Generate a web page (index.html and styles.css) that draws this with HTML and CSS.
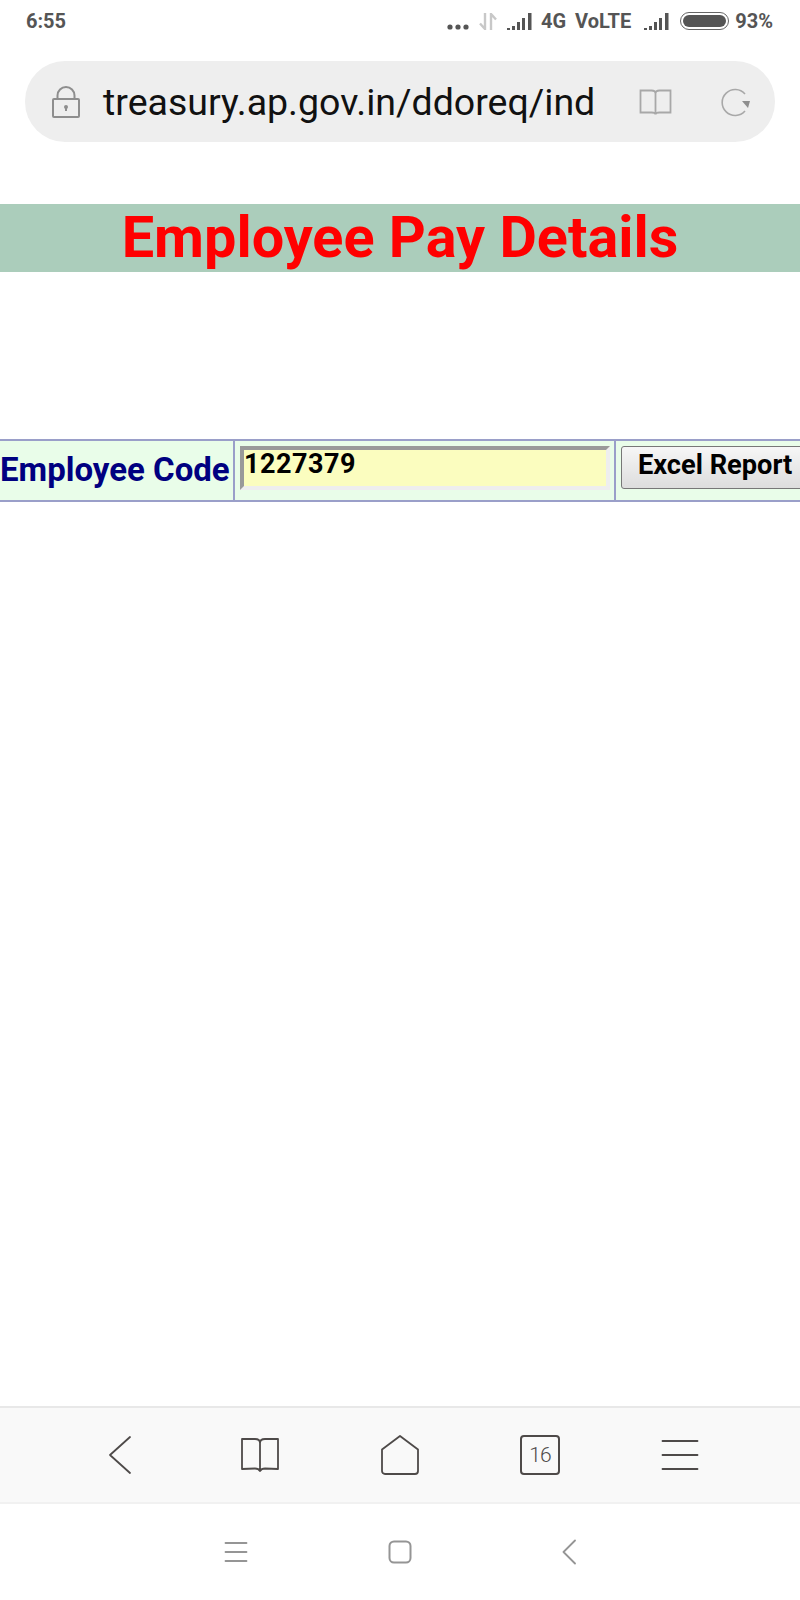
FILE: index.html
```html
<!DOCTYPE html>
<html lang="en">
<head>
    <meta charset="UTF-8">
    <meta name="viewport" content="width=device-width, initial-scale=1.0">
    <title>Employee Pay Details</title>
    <link rel="stylesheet" href="styles.css">
</head>
<body>

    <div class="status-bar">
        <span class="time">6:55</span>
        <div class="status-right">
            <svg class="dots" width="22" height="6" viewBox="0 0 22 6"><circle cx="3" cy="3" r="2.6"/><circle cx="11" cy="3" r="2.6"/><circle cx="19" cy="3" r="2.6"/></svg>
            <svg class="arrows" width="18" height="17" viewBox="0 0 18 17"><path d="M6 0v16L1 10.500M12 17V1l5 5.500" fill="none" stroke="#c8c8c8" stroke-width="2.400"/></svg>
            <svg class="signal" width="26" height="17" viewBox="0 0 26 17"><path d="M0 15h3v2H0zM5 13h3v4H5zM10 9h3v8h-3zM15 5h3v12h-3zM21 0h3.500v17H21z"/></svg>
            <span class="net">4G</span>
            <span class="net volte">VoLTE</span>
            <svg class="signal last" width="26" height="17" viewBox="0 0 26 17"><path d="M0 15h3v2H0zM5 13h3v4H5zM10 9h3v8h-3zM15 5h3v12h-3zM21 0h3.500v17H21z"/></svg>
            <div class="battery"><div class="battery-fill"></div></div>
            <span class="percent">93%</span>
        </div>
    </div>

    <div class="address-wrap">
        <div class="address-bar">
            <svg class="lock" width="30" height="34" viewBox="0 0 30 34" fill="none" stroke="#8e8e8e" stroke-width="2"><rect x="2" y="14" width="26" height="18" rx="1"/><path d="M6.500 14V10.500a8.500 8.500 0 0 1 17 0V14"/><circle cx="15" cy="22" r="2" fill="#8e8e8e" stroke="none"/><path d="M15 22v4"/></svg>
            <span class="url">treasury.ap.gov.in/ddoreq/ind</span>
            <svg class="book-small" width="33" height="28" viewBox="0 0 33 28" fill="none" stroke="#a8a8a8" stroke-width="1.800"><path d="M1.500 2.500h11c2 0 4 1 4 3v21c0-1.500-2-2-4-2h-11zM31.500 2.500h-11c-2 0-4 1-4 3v21c0-1.500 2-2 4-2h11z"/></svg>
            <svg class="reload" width="30" height="30" viewBox="0 0 30 30" fill="none"><path d="M24 7A13 13 0 1 0 24 24" stroke="#a8a8a8" stroke-width="1.600"/><path d="M21 14h8l-2 7z" fill="#8e8e8e"/></svg>
        </div>
    </div>

    <div class="page">
        <h1 class="title">Employee Pay Details</h1>

        <table class="emp-table">
            <tr>
                <td class="lbl">Employee Code</td>
                <td class="inp"><input type="text" class="code" value="1227379"></td>
                <td class="btn-cell"><button class="excel">Excel Report</button></td>
            </tr>
        </table>
    </div>

    <div class="browser-nav">
        <svg width="24" height="40" viewBox="0 0 24 40" fill="none" stroke="#4e4a49" stroke-width="1.800" stroke-linecap="round" stroke-linejoin="round"><path d="M22 2L2 20l20 18"/></svg>
        <svg width="40" height="36" viewBox="0 0 40 36" fill="none" stroke="#4e4a49" stroke-width="1.800" stroke-linejoin="round"><path d="M2 2h13c3 0 5 1.500 5 4v28c-1-2-3-2.500-5-2.500L2 32zM38 2H25c-3 0-5 1.500-5 4v28c1-2 3-2.500 5-2.500L38 32z"/></svg>
        <svg width="40" height="42" viewBox="0 0 40 42" fill="none" stroke="#4e4a49" stroke-width="1.800" stroke-linejoin="round"><path d="M20 2L38 15.500V37a3 3 0 0 1-3 3H5a3 3 0 0 1-3-3V15.500z"/></svg>
        <div class="tabs">16</div>
        <svg width="38" height="34" viewBox="0 0 38 34" fill="none" stroke="#4e4a49" stroke-width="1.800" stroke-linecap="round"><path d="M1.500 3h35M1.500 17h35M1.500 31h35"/></svg>
    </div>

    <div class="system-nav">
        <svg width="24" height="22" viewBox="0 0 24 22" fill="none" stroke="#959595" stroke-width="1.800" stroke-linecap="round"><path d="M1.500 2h21M1.500 11h21M1.500 20h21"/></svg>
        <svg class="sys-home" width="24" height="24" viewBox="0 0 24 24" fill="none" stroke="#959595" stroke-width="2"><rect x="1.500" y="1.500" width="21" height="21" rx="4.500"/></svg>
        <svg width="14" height="26" viewBox="0 0 14 26" fill="none" stroke="#959595" stroke-width="1.800" stroke-linecap="round" stroke-linejoin="round"><path d="M13 1.500L1.500 13 13 24.500"/></svg>
    </div>

</body>
</html>
```

FILE: styles.css
```css
* {
    box-sizing: border-box;
}

body {
    margin: 0;
    height: 1600px;
    display: flex;
    flex-direction: column;
    overflow: hidden;
    background-color: #ffffff;
    font-family: 'Roboto', sans-serif;
}

.status-bar {
    height: 42px;
    padding: 0 27px 0 26px;
    display: flex;
    align-items: center;
    justify-content: space-between;
    color: #555555;
    font-size: 20px;
    font-weight: 700;
}

.status-right {
    display: flex;
    align-items: center;
}

.status-right svg {
    fill: #555555;
}

.dots {
    margin-top: 11px;
    margin-right: 10px;
}

.arrows {
    margin-right: 10px;
}

.signal {
    margin-right: 8px;
}

.signal.last {
    margin-right: 10px;
}

.net {
    margin-right: 9px;
}

.volte {
    margin-right: 13px;
}

.battery {
    width: 49px;
    height: 18px;
    border: 1.500px solid #666666;
    border-radius: 9px;
    padding: 2px;
    margin-right: 6px;
}

.battery-fill {
    height: 100%;
    background-color: #555555;
    border-radius: 6px;
}

.address-wrap {
    padding: 19px 25px 0 25px;
}

.address-bar {
    height: 81px;
    border-radius: 40px;
    background-color: #eeeeee;
    display: flex;
    align-items: center;
    padding: 0 24px 0 26px;
}

.lock {
    margin-right: 22px;
}

.url {
    flex: 1;
    font-size: 37.5px;
    color: #111111;
    white-space: nowrap;
}

.reload {
    margin-left: 49px;
}

.page {
    flex: 1;
    padding-top: 62px;
}

.title {
    margin: 0;
    height: 68px;
    line-height: 68px;
    background-color: #abcdbb;
    color: #ff0000;
    text-align: center;
    font-size: 57.6px;
    font-weight: 700;
}

.emp-table {
    margin-top: 167px;
    width: 800px;
    border-collapse: collapse;
    table-layout: fixed;
    background-color: #e9fde9;
}

.emp-table td {
    height: 61px;
    padding: 0;
    border: 2px solid #9a9fc9;
}

.emp-table td:first-child {
    border-left: none;
}

.emp-table td:last-child {
    border-right: none;
}

.emp-table .lbl {
    width: 234px;
    padding-right: 6px;
    padding-bottom: 2px;
    text-align: right;
    color: #000080;
    font-size: 33px;
    font-weight: 700;
    white-space: nowrap;
}

.emp-table .inp {
    width: 381px;
    vertical-align: top;
    padding: 5px 4px 0 5px;
}

.code {
    display: block;
    width: 100%;
    height: 44px;
    padding: 0 0 8px 0;
    border-style: solid;
    border-width: 4px;
    border-color: #999999 #eeeeee #eeeeee #999999;
    background-color: #fbfdbf;
    color: #000000;
    font-family: 'Roboto', sans-serif;
    font-size: 27px;
    font-weight: 700;
    letter-spacing: 0.5px;
    outline: none;
}

.emp-table .btn-cell {
    vertical-align: top;
    padding: 5px 0 0 5px;
}

.excel {
    display: block;
    width: 200px;
    height: 43px;
    padding: 0 0 5px 16px;
    text-align: left;
    border: 1px solid #777777;
    border-radius: 3px;
    background: linear-gradient(to bottom, #f6f6f6, #dddddd);
    color: #000000;
    font-family: 'Roboto', sans-serif;
    font-size: 27.200px;
    font-weight: 700;
    white-space: nowrap;
}

.browser-nav {
    height: 98px;
    border-top: 2px solid #e8e8e8;
    border-bottom: 2px solid #f1f1f1;
    background-color: #f9f9f9;
    display: grid;
    grid-template-columns: repeat(5, 140px);
    justify-content: center;
    justify-items: center;
    align-items: center;
}

.tabs {
    width: 40px;
    height: 40px;
    border: 2px solid #4e4a49;
    border-radius: 4px;
    color: #4e4a49;
    font-size: 21px;
    font-weight: 300;
    letter-spacing: -1px;
    display: flex;
    align-items: center;
    justify-content: center;
}

.system-nav {
    height: 96px;
    display: flex;
    align-items: center;
    justify-content: center;
}

.sys-home {
    margin: 0 150px 0 140px;
}
```
